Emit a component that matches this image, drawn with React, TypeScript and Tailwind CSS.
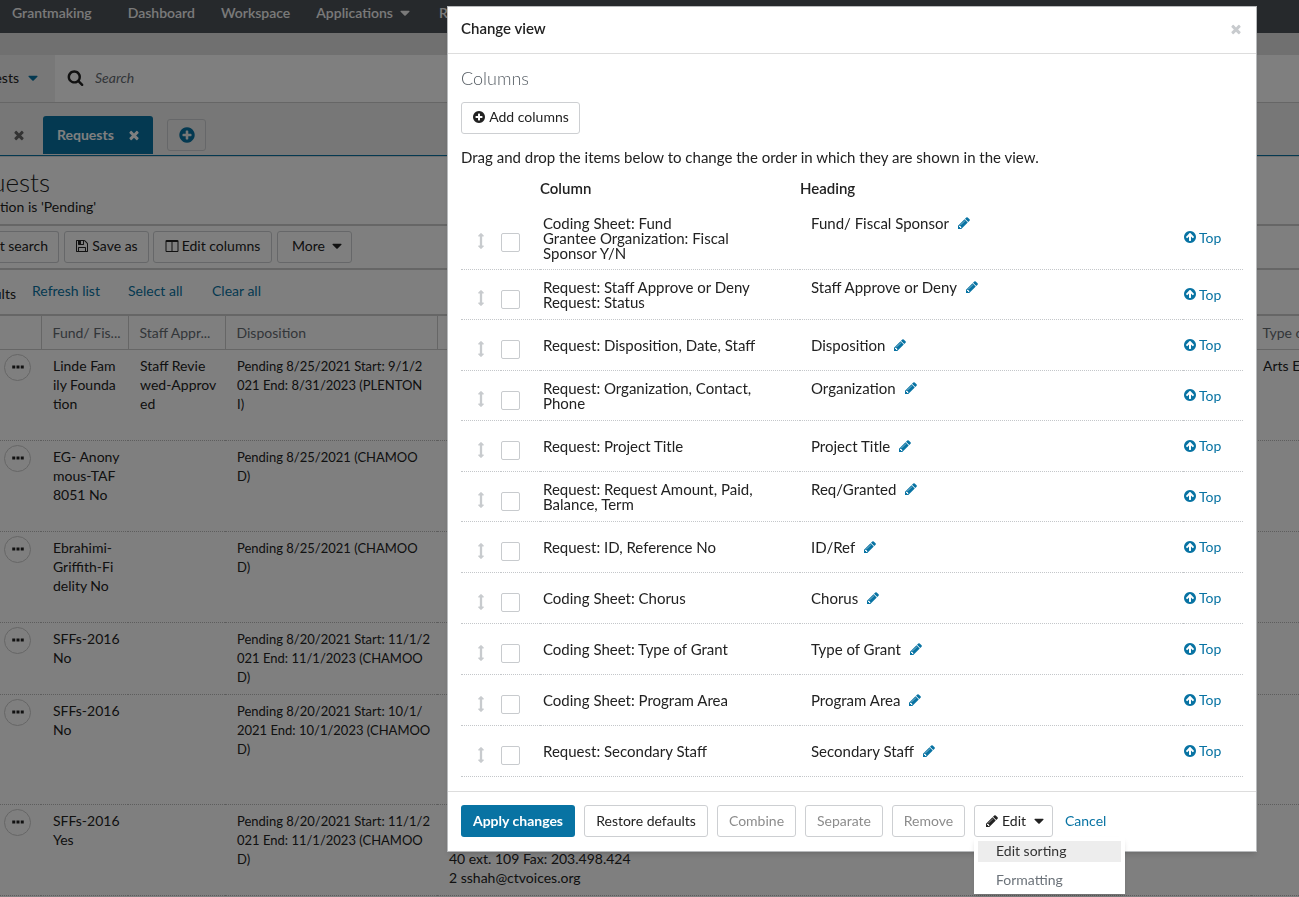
import type { ReactNode } from 'react';

const disc =
  'm320-64q0 209-103 385.5t-279.5 279.5-385.5 103-385.5-103-279.5-279.5-103-385.5 103-385.5 279.5-279.5 385.5-103 385.5 103 279.5 279.5 103 385.5z';

const paths = {
  times:
    'M1490 1322q0 40-28 68l-136 136q-28 28-68 28t-68-28l-294-294-294 294q-28 28-68 28t-68-28l-136-136q-28-28-28-68t28-68l294-294-294-294q-28-28-28-68t28-68l136-136q28-28 68-28t68 28l294 294 294-294q28-28 68-28t68 28l136 136q28 28 28 68t-28 68l-294 294 294 294q28 28 28 68z',
  plusCircle:
    'M1344 960v-128q0-26-19-45t-45-19h-256v-256q0-26-19-45t-45-19h-128q-26 0-45 19t-19 45v256h-256q-26 0-45 19t-19 45v128q0 26 19 45t45 19h256v256q0 26 19 45t45 19h128q26 0 45-19t19-45v-256h256q26 0 45-19t19-45z' +
    disc,
  pencil:
    'M491 1536l91-91-235-235-91 91v107h128v128h107zm523-928q0-22-22-22-10 0-17 7l-542 542q-7 7-7 17 0 22 22 22 10 0 17-7l542-542q7-7 7-17zm-54-192l416 416-832 832h-416v-416zm683 96q0 53-37 90l-166 166-416-416 166-165q36-38 90-38 53 0 91 38l235 234q37 39 37 91z',
  arrowUp:
    'M1412 895q0-27-18-45l-362-362-91-91q-18-18-45-18t-45 18l-91 91-362 362q-18 18-18 45t18 45l91 91q18 18 45 18t45-18l189-189v502q0 26 19 45t45 19h128q26 0 45-19t19-45v-502l189 189q19 19 45 19t45-19l91-91q18-18 18-45zm252 1q0 209-103 385.5t-279.5 279.5-385.5 103-385.5-103-279.5-279.5-103-385.5 103-385.5 279.5-279.5 385.5-103 385.5 103 279.5 279.5 103 385.5z',
  search:
    'M1216 832q0-185-131.5-316.5t-316.5-131.5-316.5 131.5-131.5 316.5 131.5 316.5 316.5 131.5 316.5-131.5 131.5-316.5zm512 832q0 52-38 90t-90 38q-54 0-90-38l-343-342q-179 124-399 124-143 0-273.5-55.5t-225-150-150-225-55.5-273.5 55.5-273.5 150-225 225-150 273.5-55.5 273.5 55.5 225 150 150 225 55.5 273.5q0 220-124 399l343 343q37 37 37 90z',
  save:
    'M512 1536h768v-384h-768v384zm896 0h128v-896q0-14-10-38.5t-20-34.5l-281-281q-10-10-34-20t-39-10v416q0 40-28 68t-68 28h-576q-40 0-68-28t-28-68v-416h-128v1280h128v-416q0-40 28-68t68-28h832q40 0 68 28t28 68v416zm-384-928v-320q0-13-9.5-22.5t-22.5-9.5h-192q-13 0-22.5 9.5t-9.5 22.5v320q0 13 9.5 22.5t22.5 9.5h192q13 0 22.5-9.5t9.5-22.5zm640 32v928q0 40-28 68t-68 28h-1344q-40 0-68-28t-28-68v-1344q0-40 28-68t68-28h928q40 0 88 20t76 48l280 280q28 28 48 76t20 88z',
  columns:
    'M224 1536h608v-1152h-640v1120q0 13 9.5 22.5t22.5 9.5zm1376-32v-1120h-640v1152h608q13 0 22.5-9.5t9.5-22.5zm128-1216v1216q0 66-47 113t-113 47h-1344q-66 0-113-47t-47-113v-1216q0-66 47-113t113-47h1344q66 0 113 47t47 113z',
  arrowsV:
    'M1216 320q0 26-19 45t-45 19h-128v1024h128q26 0 45 19t19 45-19 45l-256 256q-19 19-45 19t-45-19l-256-256q-19-19-19-45t19-45 45-19h128v-1024h-128q-26 0-45-19t-19-45 19-45l256-256q19-19 45-19t45 19l256 256q19 19 19 45z',
  caret:
    'M1408 704q0 26-19 45l-448 448q-19 19-45 19t-45-19l-448-448q-19-19-19-45t19-45 45-19h896q26 0 45 19t19 45z',
  ellipsis: 'M160 704h384v384h-384zM704 704h384v384h-384zM1248 704h384v384h-384z',
};

function Icon({ name, className = 'size-3.5' }: { name: keyof typeof paths; className?: string }) {
  return (
    <svg viewBox="0 0 1792 1792" fill="currentColor" aria-hidden="true" className={`shrink-0 ${className}`}>
      <path d={paths[name]} />
    </svg>
  );
}

function ToolButton({ children, className = 'px-[11px]' }: { children: ReactNode; className?: string }) {
  return (
    <button
      type="button"
      className={`flex h-8 items-center gap-[3px] rounded-[3px] border border-[#cdcfd2] whitespace-nowrap ${className}`}
    >
      {children}
    </button>
  );
}

type Grant = { fund: string[]; staff?: string[]; disposition: string[]; contact?: string[]; type?: string; height: string };

const grants: Grant[] = [
  {
    fund: ['Linde Fam', 'ily Founda', 'tion'],
    staff: ['Staff Revie', 'wed-Approv', 'ed'],
    disposition: ['Pending 8/25/2021 Start: 9/1/2', '021 End: 8/31/2023 (PLENTON', 'I)'],
    type: 'Arts Education',
    height: 'h-[91px]',
  },
  { fund: ['EG- Anony', 'mous-TAF', '8051 No'], disposition: ['Pending 8/25/2021 (CHAMOO', 'D)'], height: 'h-[91px]' },
  { fund: ['Ebrahimi-', 'Griffith-Fi', 'delity No'], disposition: ['Pending 8/25/2021 (CHAMOO', 'D)'], height: 'h-[91px]' },
  {
    fund: ['SFFs-2016', 'No'],
    disposition: ['Pending 8/20/2021 Start: 11/1/2', '021 End: 11/1/2023 (CHAMOO', 'D)'],
    height: 'h-[72px]',
  },
  {
    fund: ['SFFs-2016', 'No'],
    disposition: ['Pending 8/20/2021 Start: 10/1/', '2021 End: 10/1/2023 (CHAMOO', 'D)'],
    height: 'h-[110px]',
  },
  {
    fund: ['SFFs-2016', 'Yes'],
    disposition: ['Pending 8/20/2021 Start: 11/1/2', '021 End: 11/1/2023 (CHAMOO', 'D)'],
    contact: ['40 ext. 109 Fax: 203.498.424', '2 sshah@ctvoices.org'],
    height: 'h-[91px]',
  },
];

function Lines({ items = [] }: { items?: string[] }) {
  return <div className="whitespace-pre">{items.join('\n')}</div>;
}

function RequestsPage() {
  return (
    <div className="bg-white">
      <nav className="flex h-[33px] items-center gap-[26px] bg-[#4c5258] pb-[7px] pl-3 font-semibold whitespace-nowrap text-[#f4f4f4]">
        <a href="#grantmaking" className="mr-2.5">Grantmaking</a>
        <a href="#dashboard">Dashboard</a>
        <a href="#workspace">Workspace</a>
        <a href="#applications" className="flex items-center gap-1">
          Applications <Icon name="caret" className="size-4" />
        </a>
        <a href="#requests">Requests</a>
      </nav>
      <div className="h-[22px] bg-[#e0e0e0]" />
      <div className="flex h-12 border-b border-[#ccc]">
        <button type="button" className="flex w-[55px] items-center gap-1.5 bg-[#f0f0f0] pb-0.5 whitespace-nowrap">
          <span className="flex w-[19px] justify-end overflow-hidden">ests</span>
          <Icon name="caret" className="size-4 text-[#0873a3]" />
        </button>
        <label className="flex flex-1 items-center gap-[11px] pb-0.5 pl-3">
          <Icon name="search" className="size-[17px]" />
          <input
            type="text"
            aria-label="Search"
            placeholder="Search"
            className="flex-1 italic outline-none placeholder:text-[#666c73]"
          />
        </label>
      </div>
      <div className="border-b border-[#0873a3] bg-[#eee]">
        <div className="flex h-[52px] items-center pt-3">
          <button type="button" aria-label="Close tab" className="w-[43px] pl-3 text-[#666]">
            <Icon name="times" />
          </button>
          <div className="flex h-[38px] w-[110px] items-center justify-between rounded-t-[3px] bg-[#0873a3] pr-3 pl-3.5 font-bold text-white">
            Requests
            <button type="button" aria-label="Close Requests">
              <Icon name="times" />
            </button>
          </div>
          <button
            type="button"
            aria-label="New tab"
            className="ml-3.5 flex h-8 w-[39px] items-center justify-center rounded-[3px] border border-[#cdcfd2] text-[#0873a3]"
          >
            <Icon name="plusCircle" className="size-[18px]" />
          </button>
        </div>
      </div>
      <header className="h-[70px] border-t border-b-2 border-t-[#ddd] border-b-[#ccc] pt-[11px]">
        <h1 className="flex w-[50px] justify-end overflow-hidden text-[26px] leading-7 font-light">uests</h1>
        <p className="leading-[22px]">tion is 'Pending'</p>
      </header>
      <div className="flex h-11 items-center border-b-2 border-[#ccc]">
        <ToolButton className="mr-[5px] w-[59px] justify-end rounded-l-none border-l-0 pr-2.5 pb-0.5">t search</ToolButton>
        <ToolButton className="mr-1 w-[85px] justify-center pb-0.5">
          <Icon name="save" /> Save as
        </ToolButton>
        <ToolButton className="mr-[5px] w-[119px] justify-center pb-0.5">
          <Icon name="columns" /> Edit columns
        </ToolButton>
        <ToolButton className="w-[75px] justify-between pr-1.5 pb-0.5 pl-3.5">
          More <Icon name="caret" className="size-4" />
        </ToolButton>
      </div>
      <div className="flex h-[46px] items-center border-b-2 border-[#ccc] pb-0.5 text-[#0873a3]">
        <span className="flex w-8 pt-1.5 text-[#222]">
          <span className="flex w-4 justify-end overflow-hidden">ults</span>
        </span>
        <a href="#refresh" className="w-24">Refresh list</a>
        <a href="#select" className="w-[84px]">Select all</a>
        <a href="#clear">Clear all</a>
      </div>
      <table className="w-full table-fixed border-collapse text-left">
        <colgroup>
          <col className="w-[41px]" />
          <col className="w-[87px]" />
          <col className="w-[97px]" />
          <col className="w-[212px]" />
          <col />
          <col className="w-12" />
        </colgroup>
        <thead>
          <tr className="h-[33px] border-b border-[#ccc] text-[#666c73]">
            {['', 'Fund/ Fis...', 'Staff Appr...', 'Disposition', '', 'Type of Grant'].map((label, i) => (
              <th
                key={i}
                className="overflow-hidden border-r border-[#ccc] pt-0.5 pl-[11px] font-normal whitespace-nowrap last:border-r-0"
              >
                {label}
              </th>
            ))}
          </tr>
        </thead>
        <tbody>
          {grants.map((g, i) => (
            <tr
              key={i}
              className={`border-b border-dotted border-[#bbb] align-top leading-[19px] [&>td]:pt-1.5 [&>td]:pl-3 ${g.height}`}
            >
              <td className="pt-1! pl-1!">
                <button
                  type="button"
                  aria-label="Row actions"
                  className="flex size-[27px] items-center justify-center rounded-full border border-[#ccc]"
                >
                  <Icon name="ellipsis" />
                </button>
              </td>
              <td><Lines items={g.fund} /></td>
              <td><Lines items={g.staff} /></td>
              <td className="pt-[7px]! text-[13px]"><Lines items={g.disposition} /></td>
              <td className={g.contact ? 'pt-11!' : ''}><Lines items={g.contact} /></td>
              <td className="overflow-hidden whitespace-nowrap">{g.type}</td>
            </tr>
          ))}
        </tbody>
      </table>
    </div>
  );
}

const columns: { lines: string[]; heading: string }[] = [
  { lines: ['Coding Sheet: Fund', 'Grantee Organization: Fiscal', 'Sponsor Y/N'], heading: 'Fund/ Fiscal Sponsor' },
  { lines: ['Request: Staff Approve or Deny', 'Request: Status'], heading: 'Staff Approve or Deny' },
  { lines: ['Request: Disposition, Date, Staff'], heading: 'Disposition' },
  { lines: ['Request: Organization, Contact,', 'Phone'], heading: 'Organization' },
  { lines: ['Request: Project Title'], heading: 'Project Title' },
  { lines: ['Request: Request Amount, Paid,', 'Balance, Term'], heading: 'Req/Granted' },
  { lines: ['Request: ID, Reference No'], heading: 'ID/Ref' },
  { lines: ['Coding Sheet: Chorus'], heading: 'Chorus' },
  { lines: ['Coding Sheet: Type of Grant'], heading: 'Type of Grant' },
  { lines: ['Coding Sheet: Program Area'], heading: 'Program Area' },
  { lines: ['Request: Secondary Staff'], heading: 'Secondary Staff' },
];

const rowHeights = ['', 'h-[51px]', 'h-[50px]', 'h-[63px]'];
const blockHeights = ['', 'min-h-[15px]', 'min-h-[30px]', 'min-h-[45px]'];

function ColumnRow({ lines, heading }: { lines: string[]; heading: string }) {
  return (
    <tr className={`border-b border-dotted border-[#c4c7ca] leading-[15px] ${rowHeights[lines.length]}`}>
      <td className="pt-2 pl-3">
        <Icon name="arrowsV" className="size-4 text-[#c8cbce]" />
      </td>
      <td className="pt-2.5">
        <input
          type="checkbox"
          aria-label={`Select ${heading}`}
          className="block size-[19px] appearance-none rounded-[2px] border border-[#c8cbce]"
        />
      </td>
      <td className="pt-0.5 pl-[3px]"><Lines items={lines} /></td>
      <td className="pt-0.5 pl-[11px]">
        <div className={`flex items-start gap-2 ${blockHeights[lines.length]}`}>
          {heading}
          <button type="button" aria-label={`Edit ${heading}`} className="text-[#0873a3]">
            <Icon name="pencil" />
          </button>
        </div>
      </td>
      <td className="text-sm leading-[15px]">
        <a href="#top" className="flex items-center gap-0.5 text-[#0873a3]">
          <Icon name="arrowUp" /> Top
        </a>
      </td>
    </tr>
  );
}

function ChangeViewDialog() {
  return (
    <section role="dialog" aria-labelledby="dialog-title" className="flex-1 border border-[#b8babc] bg-white shadow-md">
      <header className="flex h-[47px] items-center justify-between border-b border-[#ddd] px-[13px] pb-0.5">
        <h2 id="dialog-title" className="text-[15px] font-semibold">Change view</h2>
        <button type="button" aria-label="Close" className="text-[#c8cbce]">
          <Icon name="times" />
        </button>
      </header>
      <div className="px-[13px] pt-3 pb-3.5">
        <h3 className="text-lg leading-6 font-light text-[#555c63]">Columns</h3>
        <ToolButton className="mt-3 w-[119px] justify-center pb-0.5">
          <Icon name="plusCircle" /> Add columns
        </ToolButton>
        <p className="mt-3 text-[15px] leading-[22px]">
          Drag and drop the items below to change the order in which they are shown in the view.
        </p>
        <table className="w-full table-fixed border-collapse text-left text-[15px]">
          <colgroup>
            <col className="w-10" />
            <col className="w-[39px]" />
            <col className="w-[260px]" />
            <col />
            <col className="w-[60px]" />
          </colgroup>
          <thead>
            <tr className="h-[38px] [&>th]:pt-1 [&>th]:font-semibold">
              <th />
              <th />
              <th>Column</th>
              <th>Heading</th>
              <th />
            </tr>
          </thead>
          <tbody>
            {columns.map((c) => (
              <ColumnRow key={c.heading} {...c} />
            ))}
          </tbody>
        </table>
      </div>
      <footer className="flex items-center border-t border-[#ddd] px-[13px] pt-[13px] pb-3.5">
        <button type="button" className="h-8 w-[114px] rounded-[3px] bg-[#0873a3] font-bold whitespace-nowrap text-white">
          Apply changes
        </button>
        <ToolButton className="ml-[9px] w-[124px] justify-center">Restore defaults</ToolButton>
        <ToolButton className="ml-[9px] w-[79px] justify-center text-[#8c8c8c]">Combine</ToolButton>
        <ToolButton className="ml-[9px] w-[78px] justify-center text-[#8c8c8c]">Separate</ToolButton>
        <ToolButton className="ml-[9px] w-[73px] justify-center text-[#8c8c8c]">Remove</ToolButton>
        <div className="relative ml-[9px]">
          <ToolButton className="w-[79px] pl-2.5">
            <Icon name="pencil" /> Edit <Icon name="caret" className="ml-0.5 size-4" />
          </ToolButton>
          <div role="menu" className="absolute top-8 left-0 flex w-[151px] flex-col gap-2 bg-white p-1 pb-[3px] leading-5 shadow-md">
            <button type="button" role="menuitem" className="bg-[#ededed] pb-px pl-[18px] text-left text-[#333]">
              Edit sorting
            </button>
            <button type="button" role="menuitem" className="pb-px pl-[18px] text-left text-[#6c737a]">
              Formatting
            </button>
          </div>
        </div>
        <a href="#cancel" className="ml-3 text-[#0873a3]">Cancel</a>
      </footer>
    </section>
  );
}

export default function App() {
  return (
    <main className="h-screen overflow-hidden font-['Lato','Noto_Sans',sans-serif] text-sm text-[#222]">
      <RequestsPage />
      <div className="fixed inset-0 flex items-start bg-black/50 pt-1.5 pr-[42px] pl-[447px]">
        <ChangeViewDialog />
      </div>
    </main>
  );
}
